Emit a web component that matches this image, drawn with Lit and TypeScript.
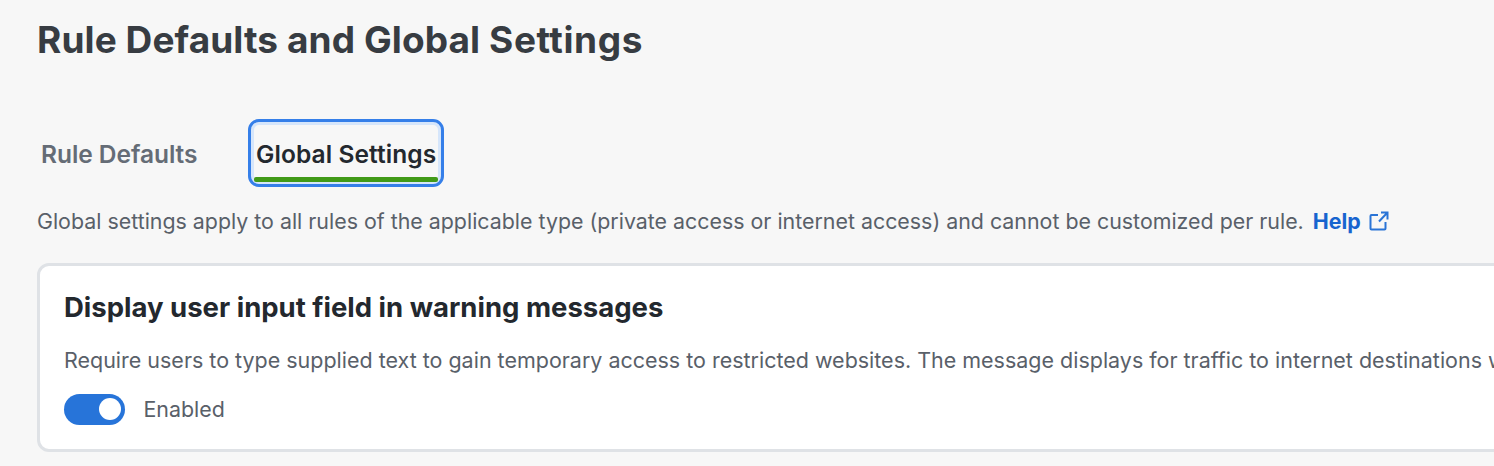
import { LitElement, html, css } from "lit";
import { customElement, property } from "lit/decorators.js";

@customElement("toggle-switch")
class ToggleSwitch extends LitElement {
  @property() label = "";
  static styles = css`
    :host { display: flex; align-items: flex-start; gap: 18.5px; height: 31px; }
    .track { box-sizing: border-box; width: 61px; height: 30.5px; border-radius: 16px; background: #2774d9; display: flex; align-items: center; justify-content: flex-end; padding-right: 4px; }
    .thumb { width: 22px; height: 22px; border-radius: 50%; background: #fff; }
    .label { font-size: 21.4px; line-height: 30px; white-space: nowrap; }
  `;
  render() {
    return html`<div class="track" role="switch" aria-checked="true"><div class="thumb"></div></div>
      <span class="label">${this.label}</span>`;
  }
}

@customElement("app-root")
class AppRoot extends LitElement {
  static styles = css`
    :host { display: flex; flex-direction: column; box-sizing: border-box; width: 100%; height: 466px; overflow: hidden; background: #f7f7f7; color: #596069; font-family: Inter, sans-serif; font-optical-sizing: none; padding: 16px 0 0 37px; }
    h1 { margin: 0; height: 48px; font-size: 37px; line-height: 48px; font-weight: 700; color: #373c42; white-space: nowrap; letter-spacing: 0.09px; }
    h1 .wide { letter-spacing: 0.58px; }
    .tabs { display: flex; align-items: flex-start; margin-top: 55px; height: 68px; }
    .tab { box-sizing: border-box; height: 68px; font-size: 24.5px; line-height: 60px; font-weight: 600; white-space: nowrap; color: #656c76; }
    .first { width: 210.5px; padding: 5px 0 0 4px; letter-spacing: -0.05px; }
    .active { width: 196.5px; border: 3px solid #357fe9; border-radius: 11px; box-shadow: inset 0 0 0 3px #d6e6fb; color: #23282e; display: flex; flex-direction: column; padding: 2px 3px 0; }
    .active .text { padding-left: 2.5px; height: 53px; letter-spacing: 0.08px; }
    .bar { height: 4.6px; border-radius: 2px; background: #419a18; }
    .intro { display: flex; align-items: center; margin-top: 19px; height: 30px; font-size: 21.38px; line-height: 30px; white-space: nowrap; }
    .help { display: flex; align-items: center; margin-left: 9px; color: #1764cf; font-weight: 700; text-decoration: none; }
    .help svg { margin-left: 8px; }
    .card { box-sizing: border-box; width: 1500px; height: 189px; margin-top: 27px; background: #fff; border: 3px solid #dfe2e6; border-radius: 12px; padding: 23px 0 0 24px; }
    h2 { margin: 0; font-size: 27.5px; line-height: 36px; height: 36px; font-weight: 700; color: #23282e; white-space: nowrap; }
    .body { margin: 20px 0 19px; font-size: 21.47px; line-height: 30px; height: 30px; white-space: nowrap; }
  `;
  render() {
    return html`
      <h1>Rule Defaults and Global <span class="wide">Settings</span></h1>
      <div class="tabs" role="tablist">
        <div class="tab first" role="tab"><span>Rule Defaults</span></div>
        <div class="tab active" role="tab"><div class="text"><span>Global Settings</span></div><div class="bar"></div></div>
      </div>
      <div class="intro">
        <span class="copy">Global settings apply to all rules of the applicable type (private access or internet access) and cannot be customized per rule.</span>
        <a class="help"><span>Help</span>
          <svg width="20" height="20" viewBox="0 0 20 20" fill="none" stroke="#2a74d6" stroke-width="2"><path d="M9 4H2.500a1 1 0 0 0-1 1v12.500a1 1 0 0 0 1 1h13a1 1 0 0 0 1-1v-6.500M12 1.500H18.500V8.500M18.500 1.500L10 10.500"/></svg>
        </a>
      </div>
      <section class="card">
        <h2><span>Display user input field in warning messages</span></h2>
        <p class="body"><span>Require users to type supplied text to gain temporary access to restricted websites. The message displays for traffic to internet destinations w</span></p>
        <toggle-switch label="Enabled"></toggle-switch>
      </section>
    `;
  }
}
